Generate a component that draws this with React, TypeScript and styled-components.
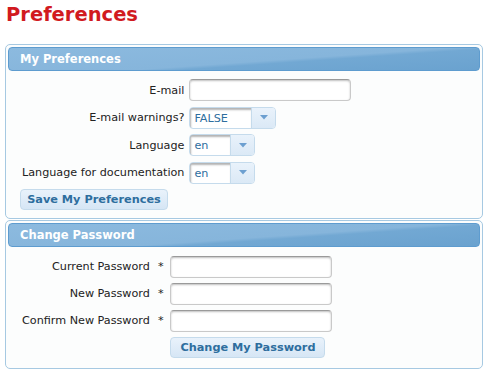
import styled, { createGlobalStyle } from 'styled-components';

const GlobalStyle = createGlobalStyle`
  html, body {
    margin: 0;
    padding: 0;
    background: #ffffff;
  }
  body {
    font-family: "DejaVu Sans", Verdana, sans-serif;
    font-size: 11.2px;
    color: #222222;
  }
`;

const LANG_ROWS = ['Language', 'Language for documentation'];
const PASSWORD_ROWS = ['Current Password', 'New Password', 'Confirm New Password'];

const Triangle = () => (
  <svg width="8" height="5" viewBox="0 0 8 5">
    <path d="M0 0 L8 0 L4 4.5 Z" fill="#6c9fd0" />
  </svg>
);

const Select = ({ value, width }: { value: string; width: number }) => (
  <SelectBox $width={width}>
    <SelectValue>{value}</SelectValue>
    <SelectButton>
      <Triangle />
    </SelectButton>
  </SelectBox>
);

const App = () => {
  return (
    <Page>
      <GlobalStyle />
      <Title>Preferences</Title>

      <Panel>
        <PanelHeader>My Preferences</PanelHeader>
        <PrefForm>
          <Label>E-mail</Label>
          <TextInput type="text" />
          <Label>E-mail warnings?</Label>
          <Select value="FALSE" width={87} />
          {LANG_ROWS.map((label) => (
            <FieldPair key={label}>
              <Label>{label}</Label>
              <Select value="en" width={66} />
            </FieldPair>
          ))}
          <ButtonCell $span>
            <Button $width={148}>Save My Preferences</Button>
          </ButtonCell>
        </PrefForm>
      </Panel>

      <Panel>
        <PanelHeader>Change Password</PanelHeader>
        <PasswordForm>
          {PASSWORD_ROWS.map((label) => (
            <FieldPair key={label}>
              <Label>
                {label}
                <Star>*</Star>
              </Label>
              <TextInput type="password" />
            </FieldPair>
          ))}
          <span />
          <ButtonCell>
            <Button $width={155}>Change My Password</Button>
          </ButtonCell>
        </PasswordForm>
      </Panel>
    </Page>
  );
};

const Page = styled.div`
  padding: 0 6px 0 5px;
  width: 478px;
`;

const Title = styled.h1`
  margin: 0;
  padding: 0 0 0 1px;
  height: 44px;
  line-height: 30px;
  font-size: 19.5px;
  font-weight: bold;
  color: #d11a1f;
`;

const Panel = styled.section`
  border: 1px solid #a6c9e2;
  border-radius: 5px;
  background: #fcfdfd;
  padding: 2px 2px 0 2px;
  & + & {
    margin-top: 1px;
  }
`;

const PanelHeader = styled.div`
  height: 22px;
  line-height: 22px;
  padding-left: 11px;
  border: 1px solid #5e9ccf;
  border-radius: 4px;
  background: linear-gradient(176deg, #8cbadf 0%, #86b5db 56%, #72a8d3 62%, #6aa2cf 100%);
  color: #ffffff;
  font-weight: bold;
  font-size: 11.5px;
`;

const FormGrid = styled.div`
  display: grid;
  grid-template-columns: auto 1fr;
  align-items: center;
  padding-left: 12px;
`;

const PrefForm = styled(FormGrid)`
  column-gap: 5px;
  row-gap: 5.5px;
  padding-top: 8px;
  padding-bottom: 8px;
  grid-template-rows: 22px 22px 22px 22px 21px;
`;

const PasswordForm = styled(FormGrid)`
  column-gap: 7px;
  row-gap: 5px;
  padding-top: 8.5px;
  padding-bottom: 10px;
  grid-template-rows: 22px 22px 22px 21px;
`;

const FieldPair = styled.div`
  display: contents;
`;

const Label = styled.label`
  text-align: right;
  white-space: nowrap;
  padding-left: 2px;
`;

const Star = styled.span`
  margin-left: 8px;
`;

const TextInput = styled.input`
  box-sizing: border-box;
  width: 162px;
  height: 22px;
  border: 1px solid #c9c9c9;
  border-top-color: #9a9a9a;
  border-radius: 4px;
  background: #ffffff;
  box-shadow: inset 0 1px 2px rgba(0, 0, 0, 0.25);
  font-family: inherit;
  font-size: 11px;
  padding: 0 4px;
  outline: none;
`;

const SelectBox = styled.div<{ $width: number }>`
  box-sizing: border-box;
  display: flex;
  width: ${({ $width }) => $width}px;
  height: 22px;
  border: 1px solid #c5dbec;
  border-radius: 4px;
  background: #ffffff;
  overflow: hidden;
`;

const SelectValue = styled.div`
  flex: 1;
  padding: 1px 0 0 4px;
  line-height: 20px;
  color: #2e6e9e;
  box-shadow: inset 1px 2px 2px rgba(0, 0, 0, 0.3);
`;

const SelectButton = styled.div`
  width: 23px;
  display: flex;
  align-items: center;
  justify-content: center;
  border-left: 1px solid #c5dbec;
  background: linear-gradient(#e9f2fb, #dbe9f6);
`;

const ButtonCell = styled.div<{ $span?: boolean }>`
  grid-column: ${({ $span }) => ($span ? '1 / -1' : 'auto')};
  display: flex;
`;

const Button = styled.button<{ $width: number }>`
  box-sizing: border-box;
  width: ${({ $width }) => $width}px;
  height: 21px;
  border: 1px solid #c5dbec;
  border-radius: 4px;
  background: linear-gradient(#e9f2fb, #d6e6f5);
  color: #2e6e9e;
  font-family: inherit;
  font-size: 11.3px;
  font-weight: bold;
  padding: 0;
  cursor: pointer;
`;

export default App;
